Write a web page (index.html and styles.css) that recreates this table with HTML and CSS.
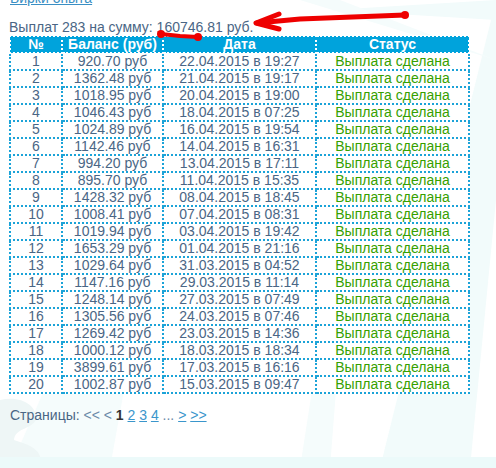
FILE: index.html
```html
<!DOCTYPE html>
<html>
<head>
<meta charset="utf-8">
<link rel="stylesheet" href="styles.css">
</head>
<body>
<svg class="bg" width="496" height="468" viewBox="0 0 496 468">
  <polygon points="496,0 380,468 470,468 496,200" fill="#f2fbfb"/>
  <polygon points="330,468 360,80 300,468" fill="#f5fcfc"/>
  <polygon points="10,468 180,80 110,468" fill="#f5fcfc"/>
  <polygon points="496,20 330,10 496,0" fill="#f2fbfb"/>
  <polygon points="496,60 300,0 340,0" fill="#f5fcfc"/>
  <path d="M0 400 C20 395 38 405 36 420 C30 430 15 428 14 440 C30 445 45 450 40 468 L0 468 Z" fill="#eef6f6"/>
  <rect x="0" y="457" width="496" height="11" fill="#ecfafa"/>
</svg>
<div class="page">
  <a class="toplink" href="#">Бирки опыта</a>
  <div class="total">Выплат 283 на сумму: 160746.81 руб.</div>
  <table class="pay">
    <colgroup><col class="c1"><col class="c2"><col class="c3"><col class="c4"></colgroup>
    <thead><tr><th>№</th><th>Баланс (руб)</th><th>Дата</th><th>Статус</th></tr></thead>
    <tbody>
      <tr><td>1</td><td>920.70 руб</td><td>22.04.2015 в 19:27</td><td class="ok">Выплата сделана</td></tr>
      <tr><td>2</td><td>1362.48 руб</td><td>21.04.2015 в 19:17</td><td class="ok">Выплата сделана</td></tr>
      <tr><td>3</td><td>1018.95 руб</td><td>20.04.2015 в 19:00</td><td class="ok">Выплата сделана</td></tr>
      <tr><td>4</td><td>1046.43 руб</td><td>18.04.2015 в 07:25</td><td class="ok">Выплата сделана</td></tr>
      <tr><td>5</td><td>1024.89 руб</td><td>16.04.2015 в 19:54</td><td class="ok">Выплата сделана</td></tr>
      <tr><td>6</td><td>1142.46 руб</td><td>14.04.2015 в 16:31</td><td class="ok">Выплата сделана</td></tr>
      <tr><td>7</td><td>994.20 руб</td><td>13.04.2015 в 17:11</td><td class="ok">Выплата сделана</td></tr>
      <tr><td>8</td><td>895.70 руб</td><td>11.04.2015 в 15:35</td><td class="ok">Выплата сделана</td></tr>
      <tr><td>9</td><td>1428.32 руб</td><td>08.04.2015 в 18:45</td><td class="ok">Выплата сделана</td></tr>
      <tr><td>10</td><td>1008.41 руб</td><td>07.04.2015 в 08:31</td><td class="ok">Выплата сделана</td></tr>
      <tr><td>11</td><td>1019.94 руб</td><td>03.04.2015 в 19:42</td><td class="ok">Выплата сделана</td></tr>
      <tr><td>12</td><td>1653.29 руб</td><td>01.04.2015 в 21:16</td><td class="ok">Выплата сделана</td></tr>
      <tr><td>13</td><td>1029.64 руб</td><td>31.03.2015 в 04:52</td><td class="ok">Выплата сделана</td></tr>
      <tr><td>14</td><td>1147.16 руб</td><td>29.03.2015 в 11:14</td><td class="ok">Выплата сделана</td></tr>
      <tr><td>15</td><td>1248.14 руб</td><td>27.03.2015 в 07:49</td><td class="ok">Выплата сделана</td></tr>
      <tr><td>16</td><td>1305.56 руб</td><td>24.03.2015 в 07:46</td><td class="ok">Выплата сделана</td></tr>
      <tr><td>17</td><td>1269.42 руб</td><td>23.03.2015 в 14:36</td><td class="ok">Выплата сделана</td></tr>
      <tr><td>18</td><td>1000.12 руб</td><td>18.03.2015 в 18:34</td><td class="ok">Выплата сделана</td></tr>
      <tr><td>19</td><td>3899.61 руб</td><td>17.03.2015 в 16:16</td><td class="ok">Выплата сделана</td></tr>
      <tr><td>20</td><td>1002.87 руб</td><td>15.03.2015 в 09:47</td><td class="ok">Выплата сделана</td></tr>
    </tbody>
  </table>
  <div class="pager">Страницы: <span class="nav">&lt;&lt; &lt;</span> <b>1</b> <a href="#">2</a> <a href="#">3</a> <a href="#">4</a> <span class="nav">...</span> <a href="#">&gt;</a> <a href="#">&gt;&gt;</a></div>
</div>
<svg class="marks" width="496" height="468" viewBox="0 0 496 468">
  <g stroke="#ee0000" stroke-linecap="round" fill="none">
    <path d="M405 15 L300 19 L257 23" stroke-width="5"/>
    <path d="M279 14 L256 23 L279 29" stroke-width="5" stroke-linejoin="round"/>
    <path d="M161 34 L180 36 L198 37" stroke-width="4"/>
  </g>
  <circle cx="405" cy="15" r="4" fill="#ee0000"/>
  <circle cx="161" cy="34" r="4" fill="#ee0000"/>
  <circle cx="198" cy="37" r="4" fill="#ee0000"/>
</svg>
</body>
</html>
```
FILE: styles.css
```css
html, body {
  margin: 0;
  padding: 0;
  background: #ffffff;
  width: 496px;
  height: 468px;
  overflow: hidden;
}
body {
  position: relative;
  font-family: "Liberation Sans", Arial, sans-serif;
  font-size: 14px;
  color: #4a6685;
}
.bg {
  position: absolute;
  left: 0;
  top: 0;
}
.marks {
  position: absolute;
  left: 0;
  top: 0;
  pointer-events: none;
}
.page {
  position: relative;
  padding: 0 0 0 9px;
  margin-top: -10px;
}
.toplink {
  display: block;
  color: #3b8fc4;
  text-decoration: underline;
  line-height: 16px;
  height: 16px;
  margin-left: 1px;
}
.total {
  line-height: 16px;
  margin-top: 13px;
  color: #4a6685;
}
.pay {
  border-collapse: collapse;
  width: 459px;
  table-layout: fixed;
  background: #ffffff;
  margin-top: 0;
}
.c1 { width: 52px; }
.c2 { width: 101px; }
.c3 { width: 153px; }
.c4 { width: 153px; }
.pay th {
  background: #00a3dc;
  color: #ffffff;
  font-weight: bold;
  border: 2px dotted #ffffff;
  padding: 0;
  line-height: 15px;
  height: 15px;
  text-align: center;
}
.pay td {
  border: 2px dotted #1ba3d8;
  padding: 0;
  line-height: 15px;
  height: 15px;
  text-align: center;
  white-space: nowrap;
}
.pay td.ok {
  color: #36a000;
}
.pager {
  margin-top: 13px;
  margin-left: 1px;
  line-height: 16px;
  color: #4a6685;
}
.pager .nav {
  color: #6b8aa8;
}
.pager b {
  color: #333333;
}
.pager a {
  color: #3a96cc;
  text-decoration: underline;
}
```
